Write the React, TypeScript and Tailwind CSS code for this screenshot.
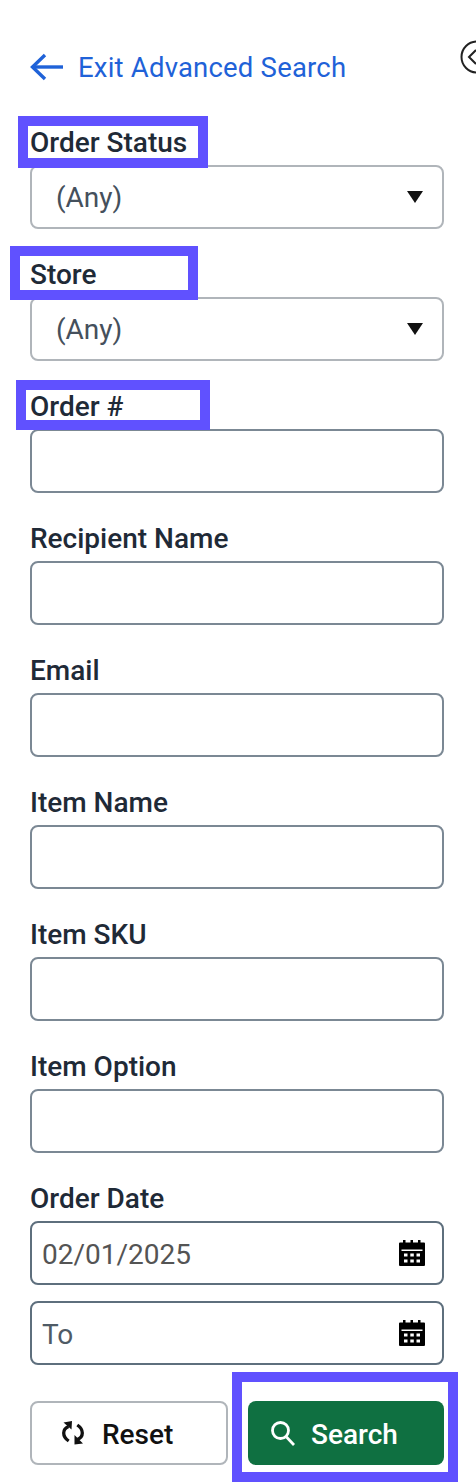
import React from "react";

const labelClass = "block h-9 leading-[28px] text-[28px] font-medium text-[#1f2a37]";
const boxClass = "h-16 w-full rounded-lg border-2 bg-white flex items-center";

function CalendarIcon() {
  return (
    <svg width="26" height="26" viewBox="0 0 26 26" className="shrink-0">
      <path
        fillRule="evenodd"
        fill="#000"
        d="M1 2.500h3V0h2.500v2.500h5V0h2.500v2.500h5V0H21.500v2.500H25a1 1 0 0 1 1 1V25a1 1 0 0 1-1 1H1a1 1 0 0 1-1-1V3.500a1 1 0 0 1 1-1zM2.500 9.500v1.500h21V9.500zM5 13.500v3h3.500v-3zM11.300 13.500v3h3.500v-3zM17.500 13.500v3H21v-3zM5 19.500v3h3.500v-3zM11.300 19.500v3h3.500v-3zM17.500 19.500v3H21v-3z"
      />
    </svg>
  );
}

function SelectField({ label, children }: { label: string; children?: React.ReactNode }) {
  return (
    <div className="relative mb-8">
      <label className={labelClass}>{label}</label>
      <div className={`${boxClass} border-[#b0b5ba] pl-6 pr-[19px] justify-between`}>
        <span className="text-[28px] pt-0.5 text-[#45505c]">(Any)</span>
        <svg width="16" height="12" viewBox="0 0 16 12">
          <path d="M0 0h16L8 12z" fill="#111" />
        </svg>
      </div>
      {children}
    </div>
  );
}

function TextField({ label, children }: { label: string; children?: React.ReactNode }) {
  return (
    <div className="relative mb-8">
      <label className={labelClass}>{label}</label>
      <div className={`${boxClass} border-[#7b8894]`} />
      {children}
    </div>
  );
}

function DateField({ value, muted }: { value: string; muted?: boolean }) {
  return (
    <div className={`${boxClass} border-[#5e6f7d] pl-[10px] pr-[17px] justify-between`}>
      <span className={`text-[28px] pt-1 ${muted ? "text-[#4f5b66]" : "text-[#545454]"}`}>{value}</span>
      <CalendarIcon />
    </div>
  );
}

export default function App() {
  return (
    <div className="relative w-[476px] h-[1484px] overflow-hidden bg-white font-['Roboto',sans-serif]">
      <div className="pl-[30px] pr-[32px] pt-[47px]">
        <div className="flex items-center h-10 mb-[42px] gap-[14px] text-[#1f62d8]">
          <svg width="34" height="28" viewBox="0 0 34 28" fill="none" stroke="#1f62d8" strokeWidth="3.400">
            <path d="M33 14H3" />
            <path d="M15 2 2.500 14 15 26" />
          </svg>
          <span className="text-[27.5px] pt-0.5 tracking-[0.2px]">Exit Advanced Search</span>
        </div>

        <SelectField label="Order Status">
          <div className="absolute left-[-12px] top-[-13px] w-[190px] h-[52px] border-[10px] border-[#6051ff]" />
        </SelectField>
        <SelectField label="Store">
          <div className="absolute left-[-20px] top-[-15px] w-[188px] h-[54px] border-[10px] border-[#6051ff]" />
        </SelectField>
        <TextField label="Order #">
          <div className="absolute left-[-14px] top-[-13px] w-[194px] h-[50px] border-[10px] border-[#6051ff]" />
        </TextField>
        <TextField label="Recipient Name" />
        <TextField label="Email" />
        <TextField label="Item Name" />
        <TextField label="Item SKU" />
        <TextField label="Item Option" />

        <label className={labelClass}>Order Date</label>
        <div className="flex flex-col gap-4">
          <DateField value="02/01/2025" />
          <DateField value="To" muted />
        </div>

        <div className="flex gap-5 mt-9">
          <button className="w-[198px] h-16 rounded-lg border-2 border-[#b0b5ba] bg-white flex items-center pl-[30px] gap-[18px] text-[28px] font-medium text-[#111]">
            <svg width="22" height="24" viewBox="0 0 22 24" fill="none" stroke="#111" strokeWidth="3.300">
              <path d="M6.500 5.500C3 7 1.700 9.500 1.700 12c0 3.500 2 6 5 8" />
              <path d="M15.500 18.500c3.500-1.500 4.800-4 4.800-6.500 0-3.500-2-6-5-8" />
              <path fill="#111" stroke="none" d="M1.500 1.500 10 0 9.500 8.500zM12.500 23.500 21 22.500l-8.500-8.500z" />
            </svg>
            <span className="pt-1">Reset</span>
          </button>
          <div className="relative">
            <button className="w-[196px] h-16 rounded-lg bg-[#0f7041] flex items-center pl-[23px] gap-[16px] text-[28px] font-medium text-white">
              <svg width="24" height="25" viewBox="0 0 24 25" fill="none" stroke="#fff" strokeWidth="2.800">
                <circle cx="9.500" cy="9.500" r="8" />
                <path d="M15.500 16 23 24" />
              </svg>
              <span className="pt-1">Search</span>
            </button>
            <div className="absolute left-[-16px] top-[-29px] w-[226px] h-[110px] border-[10px] border-[#6051ff]" />
          </div>
        </div>
      </div>

      <svg width="20" height="34" viewBox="0 0 20 34" fill="none" stroke="#222" strokeWidth="2" className="absolute left-[460px] top-[40px]">
        <circle cx="17" cy="17" r="15.500" />
        <path d="M16 10 9 17l7 7" />
      </svg>
    </div>
  );
}
